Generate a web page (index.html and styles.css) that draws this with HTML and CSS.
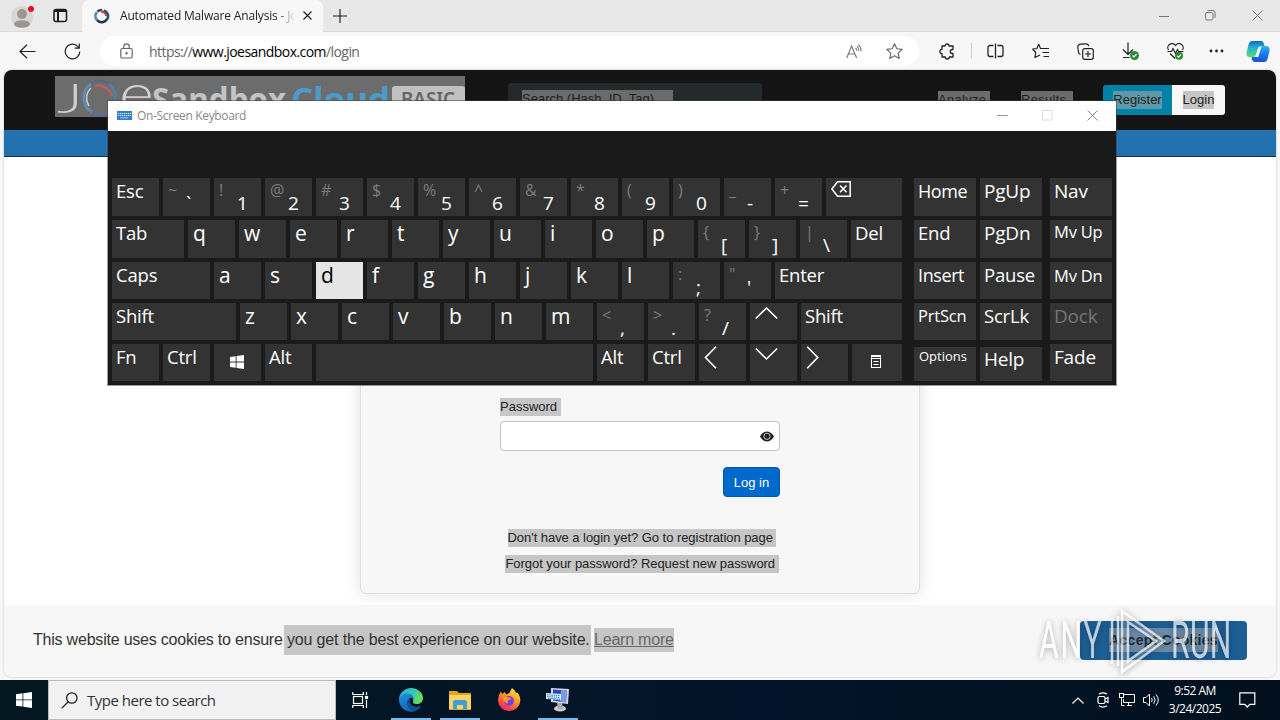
FILE: index.html
```html
<!DOCTYPE html>
<html lang="en">
<head>
    <meta charset="UTF-8">
    <title>Automated Malware Analysis - Joe Sandbox Cloud Basic</title>
    <link rel="stylesheet" href="styles.css">
</head>
<body>

<!-- browser -->
<div class="browser">
    <div class="tabbar">
        <svg class="avatar" width="26" height="26" viewBox="0 0 26 26">
            <circle cx="11" cy="14" r="11" fill="#d9d7d5"/>
            <circle cx="11" cy="11" r="5" fill="#9b9794"/>
            <ellipse cx="11" cy="21" rx="8" ry="3.800" fill="#9b9794"/>
            <circle cx="20" cy="6" r="3" fill="#e81123"/>
        </svg>
        <svg class="workspaces" width="15" height="15" viewBox="0 0 15 15" fill="none" stroke="#1b1b1b" stroke-width="1.500">
            <rect x="1" y="1.500" width="12.500" height="12" rx="2"/>
            <path d="M1 3h12.500M5 4v9.500" stroke-width="2"/>
        </svg>
        <div class="tab">
            <svg width="16" height="16" viewBox="0 0 16 16" fill="none" stroke-width="2.600">
                <path d="M3 12A6 6 0 0 1 3 4" stroke="#4b86b4"/>
                <path d="M3.500 3.500A6 6 0 0 1 8 2" stroke="#26466b"/>
                <path d="M7 3.500A5 5 0 0 1 12.500 8" stroke="#e23a3e"/>
                <path d="M10 2.400A6 6 0 0 1 13 11.500" stroke="#2c5378"/>
                <path d="M13 11A6 6 0 0 1 3 12" stroke="#1d3552"/>
            </svg>
            <span class="tab-title">Automated Malware Analysis - Jo</span>
            <svg class="tab-close" width="9" height="9" viewBox="0 0 9 9" stroke="#222" stroke-width="1.200"><path d="M.5.5l8 8M8.500.5l-8 8"/></svg>
        </div>
        <svg class="newtab" width="14" height="14" viewBox="0 0 14 14" stroke="#222" stroke-width="1.200"><path d="M7 0v14M0 7h14"/></svg>
        <div class="winbtns">
            <svg width="10" height="12" viewBox="0 0 10 12" stroke="#777"><path d="M0 6.500h10"/></svg>
            <svg width="11" height="11" viewBox="0 0 11 11" fill="none" stroke="#777"><rect x=".5" y="2.500" width="7.500" height="7.500" rx="1.500"/><path d="M2.500.5h5.500a2 2 0 0 1 2 2v5.500"/></svg>
            <svg width="11" height="11" viewBox="0 0 11 11" stroke="#777"><path d="M.5.5l10 10M10.500.5l-10 10"/></svg>
        </div>
    </div>

    <div class="toolbar">
        <svg class="back" width="17" height="15" viewBox="0 0 17 15" fill="none" stroke="#222" stroke-width="1.200"><path d="M16.500 7.500H1M8 .8L1 7.500l7 6.700"/></svg>
        <svg class="reload" width="17" height="17" viewBox="0 0 17 17" fill="none" stroke="#222" stroke-width="1.200"><path d="M15.800 8.500A7.300 7.300 0 1 1 12.800 2.600L15 4.800M15.300.5v4.600h-4.600"/></svg>
        <div class="address">
            <svg class="lock" width="13" height="16" viewBox="0 0 13 16" fill="none" stroke="#666" stroke-width="1.200"><rect x=".8" y="5.500" width="11.400" height="9.500" rx="1.500"/><path d="M3.800 5.500V3.500a2.700 2.700 0 0 1 5.400 0v2"/><circle cx="6.500" cy="10.200" r=".6" fill="#666"/></svg>
            <span class="url">https://<b>www.joesandbox.com</b>/login</span>
            <svg class="aloud" width="16" height="15" viewBox="0 0 16 15" fill="none" stroke="#777" stroke-width="1.100"><path d="M.7 14L5.600 2l5 12M2.300 10h6.700M9.500 3.800a3.500 3.500 0 0 1 1.200 3M11 2.200a6 6 0 0 1 1.800 5M12.500.7a8 8 0 0 1 2.400 6.500"/></svg>
            <svg class="star" width="17" height="16" viewBox="0 0 17 16" fill="none" stroke="#666" stroke-width="1.100" stroke-linejoin="round"><path d="M8.500.8l2.300 4.900 5.400.7-4 3.700 1 5.300-4.700-2.600-4.700 2.600 1-5.300-4-3.700 5.400-.7z"/></svg>
        </div>
        <div class="tools">
            <svg width="17" height="17" viewBox="0 0 17 17" fill="none" stroke="#222" stroke-width="1.300" stroke-linejoin="round"><path d="M3 3h3a2 2 0 0 1 4 0h4v3.500h-.7a2 2 0 0 0 0 4h.7V14h-3.700a2 2 0 0 1-4 0H3v-3.300a2.200 2.200 0 0 1 0-4.400z"/></svg>
            <i class="divider"></i>
            <svg width="17" height="16" viewBox="0 0 17 16" fill="none" stroke="#222" stroke-width="1.300"><path d="M8.500.5v15M6.500 2.500H3a2 2 0 0 0-2 2v7a2 2 0 0 0 2 2h3.500M10.500 2.500H14a2 2 0 0 1 2 2v7a2 2 0 0 1-2 2h-3.500"/></svg>
            <svg width="17" height="16" viewBox="0 0 17 16" fill="none" stroke="#222" stroke-width="1.200" stroke-linejoin="round"><path d="M10 5.500L8.500 5.500 6.700 1.300 4.900 5.500.7 6l3 3.500-.8 5L8 12M9.800 5.500H17M10.500 9.500H17M11.500 13.500H17"/></svg>
            <svg width="17" height="17" viewBox="0 0 17 17" fill="none" stroke="#222" stroke-width="1.200"><rect x="5.700" y="5.700" width="10.600" height="10.600" rx="2"/><path d="M11 8v6M8 11h6M3.500 11.500A2.500 2.500 0 0 1 1.500 9L.8 4.500A3 3 0 0 1 3.600 1.200L9 .8a2.500 2.500 0 0 1 2.600 2.500"/></svg>
            <svg width="17" height="18" viewBox="0 0 17 18" fill="none" stroke="#222" stroke-width="1.200"><path d="M6 .5v11.500M1 7.500l5 4.800 5-4.800M1 15.500h6.500"/><circle cx="12.500" cy="13.500" r="4.500" fill="#2a8a35" stroke="none"/><path d="M10.500 13.500l1.500 1.500 2.600-2.800" stroke="#fff"/></svg>
            <svg width="17" height="17" viewBox="0 0 17 17" fill="none" stroke="#222" stroke-width="1.200"><path d="M1.500 7A4 4 0 0 1 8.500 2.500 4 4 0 0 1 15.500 7M.5 8.500h4l1.500-3 2.500 5 2-4 1 2h5M3 10.500L8 15.500"/><circle cx="12" cy="12.800" r="4" fill="#2a8a35" stroke="none"/><path d="M10.200 12.800l1.300 1.400 2.500-2.600" stroke="#fff"/></svg>
            <svg class="more" width="15" height="4" viewBox="0 0 15 4" fill="#222"><circle cx="2" cy="2" r="1.400"/><circle cx="7.500" cy="2" r="1.400"/><circle cx="13" cy="2" r="1.400"/></svg>
            <svg class="copilot" width="24" height="23" viewBox="0 0 24 23">
                <defs>
                    <linearGradient id="cpA" x1="0" y1="0" x2="0" y2="1"><stop offset="0" stop-color="#1469c9"/><stop offset=".45" stop-color="#25b7cf"/><stop offset="1" stop-color="#63d66c"/></linearGradient>
                    <linearGradient id="cpB" x1="0" y1="0" x2="0" y2="1"><stop offset="0" stop-color="#2bb3f3"/><stop offset=".6" stop-color="#1973e8"/><stop offset="1" stop-color="#1550d4"/></linearGradient>
                </defs>
                <path d="M6 1h9c2 0 2.500 1.500 3 3l.5 2h-3c-2 0-3 1-3.500 3l-1.500 5c-.6 2-1.500 3-3.500 3H4c-3 0-4-2-3.300-5l2-8C3.400 2 4.400 1 6 1z" fill="url(#cpA)"/>
                <path d="M18 22H9c-2 0-2.700-1.500-3.200-3.200L5.500 17H8c2 0 3-1 3.600-3l1.600-5c.6-2 1.600-3 3.500-3H20c3 0 4.300 2 3.500 5l-2 8c-.6 2-1.800 3-3.500 3z" fill="url(#cpB)"/>
                <path d="M12.500 7h3l-3.300 10h-3z" fill="#f7f7f7"/>
            </svg>
        </div>
    </div>

    <div class="page">
        <div class="header">
            <svg class="logo" width="410" height="41" viewBox="0 0 410 41">
                <rect width="410" height="41" fill="#6c6c6c"/>
                <text class="logo-thin" x="2" y="37" font-size="41" textLength="26" lengthAdjust="spacingAndGlyphs">J</text>
                <g fill="none" stroke-width="3">
                    <path d="M37 36A16.500 16.500 0 0 1 36 8" stroke="#5f8db4"/>
                    <path d="M34 30A14 14 0 0 1 36 12" stroke="#c3ccd6" stroke-width="1.500"/>
                    <path d="M36 7A16.500 16.500 0 0 1 54 8" stroke="#50687f" stroke-width="2"/>
                    <path d="M40 10A14 14 0 0 1 57 20" stroke="#b85f5f"/>
                    <path d="M54 8A16.500 16.500 0 0 1 60 23" stroke="#4f7fa8"/>
                    <path d="M38 37A15.500 15.500 0 0 0 54 35" stroke="#5a6f96"/>
                </g>
                <text class="logo-thin" x="64" y="38" font-size="58" textLength="35" lengthAdjust="spacingAndGlyphs">e</text>
                <text class="logo-bold" x="97" y="35" font-size="32" textLength="134" lengthAdjust="spacingAndGlyphs" fill="#c4c4c4">Sandbox</text>
                <text class="logo-bold" x="236" y="35" font-size="32" textLength="99" lengthAdjust="spacingAndGlyphs" fill="#4b9bcb">Cloud</text>
                <rect x="337" y="10" width="73" height="31" rx="3" fill="#c0c0c0"/>
                <text class="logo-basic" x="346" y="30" font-size="20" textLength="54" lengthAdjust="spacingAndGlyphs">BASIC</text>
            </svg>
            <div class="search-hash"><span class="sel-dark">Search (Hash, ID, Tag)</span></div>
            <div class="nav"><span class="sel-dark">Analyze</span><span class="sel-dark">Results</span></div>
            <div class="account">
                <a class="register"><span>Register</span></a>
                <a class="login"><span>Login</span></a>
            </div>
        </div>
        <div class="bluebar"></div>
        <div class="content">
            <div class="card">
                <div class="form">
                    <label><span class="sel">Password&nbsp;</span></label>
                    <div class="input">
                        <svg width="14" height="11" viewBox="0 0 14 11"><path d="M0 5.500C2 2 4.500.6 7 .6S12 2 14 5.500C12 9 9.500 10.400 7 10.400S2 9 0 5.500z" fill="#222"/><circle cx="7" cy="5.300" r="3.100" fill="none" stroke="#ddd" stroke-width=".9"/><circle cx="7" cy="5" r="2.200" fill="#222"/></svg>
                    </div>
                    <div class="actions"><button class="submit">Log in</button></div>
                </div>
                <p class="link"><span class="sel">Don't have a login yet? Go to registration page&nbsp;</span></p>
                <p class="link"><span class="sel">Forgot your password? Request new password&nbsp;</span></p>
            </div>
        </div>
        <div class="cookies">
            <span class="cookie-text">This website uses cookies to ensure</span>
            <span class="cookie-sel">you get the best experience on our website.</span>
            <a class="learn">Learn more</a>
            <div class="accept"><span>Accept Cookies</span></div>
        </div>
    </div>
</div>

<!-- taskbar -->
<div class="taskbar">
    <div class="start">
        <svg width="16" height="16" viewBox="0 0 16 16" fill="#fff"><path d="M0 2.200L6.500 1.300V7.500H0zM7.300 1.200L16 0v7.500H7.300zM0 8.300h6.500v6.300L0 13.700zM7.300 8.300H16V16l-8.700-1.200z"/></svg>
    </div>
    <div class="searchbox">
        <svg width="17" height="17" viewBox="0 0 17 17" fill="none" stroke="#222" stroke-width="1.300"><circle cx="10.800" cy="6" r="5.200"/><path d="M7.200 9.800L.6 16.400"/></svg>
        <span>Type here to search</span>
    </div>
    <div class="app taskview">
        <svg width="17" height="16" viewBox="0 0 17 16" fill="none" stroke="#fff" stroke-width="1.200"><rect x="1.500" y="4.500" width="9" height="7"/><path d="M.8 0v2.500h10.500V0M.8 16v-2.500h10.500V16M14.500 0v3M14.500 8v8"/><rect x="13.500" y="4.500" width="2" height="2" fill="#fff"/></svg>
    </div>
    <div class="app open">
        <svg width="24" height="24" viewBox="0 0 24 24">
            <defs>
                <linearGradient id="edA" x1="0" y1="0" x2="1" y2=".4"><stop offset="0" stop-color="#2aa8e0"/><stop offset=".6" stop-color="#35c8b4"/><stop offset="1" stop-color="#6bdb57"/></linearGradient>
                <linearGradient id="edB" x1="0" y1="0" x2=".5" y2="1"><stop offset="0" stop-color="#1f94df"/><stop offset="1" stop-color="#1262b8"/></linearGradient>
            </defs>
            <path d="M0 12C0 5 5.500 0 12 0s12 4.500 12 10c0 4-3 6-6.500 6-3 0-4-1-3.500-2.500 1-2-.5-5.500-5-5.500-5 0-9 2-9 4z" fill="url(#edA)"/>
            <path d="M0 12c0-4 4-6.500 8.500-6.500S15 9 15 11c-1.500-2-5-1.500-6 2-1.300 4.800 3 9.500 8.500 8.700l-2 1.500A12 12 0 0 1 0 12z" fill="url(#edB)"/>
            <path d="M8.500 12.500c-2 5 2 10.500 7 10.700 3-1 5.500-3 6.800-5.500-4 2-10 1.300-11.300-3-.5-2 0-3 1-4-1.600 0-3 .6-3.500 1.800z" fill="#134d94"/>
        </svg>
    </div>
    <div class="app open">
        <svg width="22" height="20" viewBox="0 0 22 20"><path d="M0 1h8l2 2h12v4H0z" fill="#e5a321"/><path d="M0 5h22v14H0z" fill="#fcd462"/><path d="M4 19v-7q0-2 2-2h10q2 0 2 2v7h-4v-4H8v4z" fill="#3f9fdc"/><path d="M0 19h22v1H0z" fill="#d9a437"/></svg>
    </div>
    <div class="app">
        <svg width="24" height="24" viewBox="0 0 24 24">
            <defs><linearGradient id="ffA" x1=".8" y1="0" x2=".2" y2="1"><stop offset="0" stop-color="#ffe14a"/><stop offset=".45" stop-color="#ff9427"/><stop offset=".8" stop-color="#fb3b52"/><stop offset="1" stop-color="#e5268a"/></linearGradient></defs>
            <path d="M1 13C1 9 2 6 4 3.500L5 6l3-2 1 2.500c2-.5 3.500-1 4-3L15 0c2 1.500 3.500 3 4 5l1.500-.5C22.500 7 23.500 10 23.300 13A11.200 11.200 0 0 1 1 13z" fill="url(#ffA)"/>
            <circle cx="12" cy="13" r="5" fill="#7b3fe0"/><path d="M6 9c2-1 4-.5 5.500.5l2.500.5c0 1.500-2 2-3 2.500-.8 1-.5 2 .5 3-3 0-6-3-5.500-6.500z" fill="#ff9427"/>
        </svg>
    </div>
    <div class="app open">
        <svg width="24" height="24" viewBox="0 0 24 24"><ellipse cx="14" cy="20.500" rx="6" ry="3" fill="#cfcfca"/><path d="M11 15l5 0 1 6h-5z" fill="#aaa"/><path d="M5 0l18 1-1 15-17-2z" fill="#d8dbe4"/><path d="M7 1.500l14 1-1 12-13-2z" fill="#2747b9"/><path d="M15 2l6 .5-1 12-6-1z" fill="#7b9bea"/><path d="M0 5l15 1v6L0 11z" fill="#dfeefc"/><path d="M1 6.800l13 .8M1 8.600l13 .8M2 10.300l12 .8" stroke="#2e7cc5" stroke-width="1" stroke-dasharray="1.500 .7"/></svg>
    </div>
    <div class="tray">
        <svg class="t-up" width="12" height="7" viewBox="0 0 12 7" fill="none" stroke="#fff" stroke-width="1.200"><path d="M.5 6.500L6 1l5.500 5.500"/></svg>
        <svg class="t-cam" width="12" height="16" viewBox="0 0 12 16" fill="none" stroke="#fff" stroke-width="1.200"><rect x="1" y="4.500" width="7" height="7" rx="1.500"/><path d="M8 7l3-1.500v5L8 9M2 2.200Q6-.5 10 2.200M2 13.800q4 2.700 8 0"/></svg>
        <svg class="t-net" width="16" height="14" viewBox="0 0 16 14" fill="none" stroke="#fff"><path d="M5 1.500h10.500v8H4.500V6M8 12.500h5M9.500 9.500v3M2.500 5v7.500h3"/><rect x=".5" y=".5" width="4" height="4"/></svg>
        <svg class="t-vol" width="17" height="14" viewBox="0 0 17 14" fill="none" stroke="#fff"><path d="M.5 4.500h2.500L6.500 1v12L3 9.500H.5zM8.500 5q1.500 2 0 4M10.700 3.300q3 3.700 0 7.400M13 1.500q4.500 5.500 0 11"/></svg>
        <div class="clock"><span>9:52 AM</span><span>3/24/2025</span></div>
        <svg class="t-note" width="17" height="16" viewBox="0 0 17 16" fill="none" stroke="#fff" stroke-width="1.200"><path d="M.8.8h15v11.500h-5L8.300 15l-2.500-2.700h-5z"/></svg>
    </div>
</div>

<!-- on-screen keyboard window -->
<div class="osk">
    <div class="osk-title">
        <svg width="15" height="9" viewBox="0 0 15 9"><rect width="15" height="9" fill="#2f7fd0"/><path d="M1 2.500h13M1 4.500h13M3.500 6.800h8" stroke="#fff" stroke-dasharray="1.200 .8"/></svg>
        <span>On-Screen Keyboard</span>
        <div class="osk-btns">
            <svg width="11" height="11" viewBox="0 0 11 11" stroke="#999"><path d="M0 5.500h11"/></svg>
            <svg width="11" height="11" viewBox="0 0 11 11" fill="none" stroke="#ddd"><rect x=".5" y=".5" width="9.500" height="9.500"/></svg>
            <svg width="11" height="11" viewBox="0 0 11 11" stroke="#888"><path d="M.5.500l10 10M10.500.5l-10 10"/></svg>
        </div>
    </div>
    <div class="osk-body">
        <div class="main-keys">
            <div class="row tall">
                <div class="key">Esc</div>
                <div class="key dual"><i>~</i><b>`</b></div>
                <div class="key dual"><i>!</i><b>1</b></div>
                <div class="key dual"><i>@</i><b>2</b></div>
                <div class="key dual"><i>#</i><b>3</b></div>
                <div class="key dual"><i>$</i><b>4</b></div>
                <div class="key dual"><i>%</i><b>5</b></div>
                <div class="key dual"><i>^</i><b>6</b></div>
                <div class="key dual"><i>&amp;</i><b>7</b></div>
                <div class="key dual"><i>*</i><b>8</b></div>
                <div class="key dual"><i>(</i><b>9</b></div>
                <div class="key dual"><i>)</i><b>0</b></div>
                <div class="key dual"><i>_</i><b>-</b></div>
                <div class="key dual"><i>+</i><b>=</b></div>
                <div class="key grow"><svg class="bksp" width="20" height="16" viewBox="0 0 20 16" fill="none" stroke="#fff" stroke-width="1.500"><path d="M.9 8L6.500.8h12.700v14.400H6.500zM9 4.500l6.500 6.700M15.500 4.500L9 11.200"/></svg></div>
            </div>
            <div class="row tall">
                <div class="key w-tab">Tab</div>
                <div class="key char">q</div>
                <div class="key char">w</div>
                <div class="key char">e</div>
                <div class="key char">r</div>
                <div class="key char">t</div>
                <div class="key char">y</div>
                <div class="key char">u</div>
                <div class="key char">i</div>
                <div class="key char">o</div>
                <div class="key char">p</div>
                <div class="key dual"><i>{</i><b>[</b></div>
                <div class="key dual"><i>}</i><b>]</b></div>
                <div class="key dual"><i>|</i><b>\</b></div>
                <div class="key grow">Del</div>
            </div>
            <div class="row">
                <div class="key w-caps">Caps</div>
                <div class="key char">a</div>
                <div class="key char">s</div>
                <div class="key char pressed">d</div>
                <div class="key char">f</div>
                <div class="key char">g</div>
                <div class="key char">h</div>
                <div class="key char">j</div>
                <div class="key char">k</div>
                <div class="key char">l</div>
                <div class="key dual"><i>:</i><b>;</b></div>
                <div class="key dual"><i>"</i><b>'</b></div>
                <div class="key grow">Enter</div>
            </div>
            <div class="row">
                <div class="key w-shift">Shift</div>
                <div class="key char">z</div>
                <div class="key char">x</div>
                <div class="key char">c</div>
                <div class="key char">v</div>
                <div class="key char">b</div>
                <div class="key char">n</div>
                <div class="key char">m</div>
                <div class="key dual"><i>&lt;</i><b>,</b></div>
                <div class="key dual"><i>&gt;</i><b>.</b></div>
                <div class="key dual"><i>?</i><b>/</b></div>
                <div class="key"><svg class="arrow" width="23" height="23" viewBox="0 0 23 23"><path d="M.8 13.500L11.500 3l10.700 10.500"/></svg></div>
                <div class="key grow">Shift</div>
            </div>
            <div class="row">
                <div class="key">Fn</div>
                <div class="key">Ctrl</div>
                <div class="key icon"><svg width="14" height="14" viewBox="0 0 16 16" fill="#fff"><path d="M0 2.200L6.500 1.300V7.500H0zM7.500 1.200L16 0v7.500H7.500zM0 8.500h6.500v6.100L0 13.700zM7.500 8.500H16V16l-8.500-1.200z"/></svg></div>
                <div class="key">Alt</div>
                <div class="key w-space"></div>
                <div class="key">Alt</div>
                <div class="key">Ctrl</div>
                <div class="key"><svg class="arrow" width="23" height="23" viewBox="0 0 23 23"><path d="M12 .8L1.500 11.500 12 22.200"/></svg></div>
                <div class="key"><svg class="arrow" width="23" height="23" viewBox="0 0 23 23"><path d="M.8 2.500L11.500 13 22.200 2.500"/></svg></div>
                <div class="key"><svg class="arrow" width="23" height="23" viewBox="0 0 23 23"><path d="M1.200.8L11.700 11.500 1.200 22.200"/></svg></div>
                <div class="key grow icon"><svg width="10" height="13" viewBox="0 0 10 13" fill="none" stroke="#fff"><rect x=".5" y=".5" width="9" height="12"/><path d="M0 1.500h10M0 3.500h10M2.500 6.500h5M2.500 9.500h5"/></svg></div>
            </div>
        </div>
        <div class="nav-keys">
            <div class="key s17">Home</div>
            <div class="key s19">PgUp</div>
            <div class="key">End</div>
            <div class="key s19">PgDn</div>
            <div class="key s17">Insert</div>
            <div class="key">Pause</div>
            <div class="key s16">PrtScn</div>
            <div class="key">ScrLk</div>
            <div class="key s13 low">Options</div>
            <div class="key s19 low">Help</div>
        </div>
        <div class="win-keys">
            <div class="key s19">Nav</div>
            <div class="key s16 up">Mv Up</div>
            <div class="key s16 down">Mv Dn</div>
            <div class="key s19 off">Dock</div>
            <div class="key s19">Fade</div>
        </div>
    </div>
</div>

<!-- watermark -->
<svg class="watermark" width="210" height="70" viewBox="0 0 210 70">
    <g fill="#fff" class="wm-text">
        <text transform="translate(9 52) scale(.58 1)" textLength="108" lengthAdjust="spacing" font-size="52">ANY</text>
        <text transform="translate(141 52) scale(.58 1)" textLength="104" lengthAdjust="spacing" font-size="52">RUN</text>
    </g>
    <path d="M82 12v46M88 10v50" stroke="#fff" stroke-width="2.500"/>
    <path d="M92 5l42 30-42 31zM98 16v39l28-20z" fill="#fff" fill-opacity=".25" stroke="#fff" stroke-width="2.500"/>
</svg>

</body>
</html>
```
FILE: styles.css
```css
* {
    box-sizing: border-box;
    padding: 0;
    margin: 0;
}
body {
    width: 1280px;
    height: 720px;
    overflow: hidden;
    position: relative;
    display: flex;
    flex-direction: column;
    font-family: "Open Sans", "Noto Sans", sans-serif;
    font-size: 12px;
    color: #222;
}
svg {
    display: block;
    flex: none;
}

/* browser */
.browser {
    height: 680px;
    display: flex;
    flex-direction: column;
    background: #f7f7f7;
}
.tabbar {
    height: 32px;
    display: flex;
    align-items: center;
    background: #e8e8e8;
    border-bottom: 1px solid #dadada;
}
.avatar {
    margin-left: 11px;
}
.workspaces {
    margin-left: 16px;
}
.tab {
    width: 241px;
    height: 32px;
    margin-left: 14px;
    padding: 0 11px 0 12px;
    display: flex;
    align-items: center;
    background: #f7f7f7;
    border-radius: 7px 7px 0 0;
}
.tab-title {
    width: 174px;
    margin-left: 10px;
    overflow: hidden;
    white-space: nowrap;
    font-size: 12px;
    letter-spacing: -.17px;
    -webkit-mask-image: linear-gradient(90deg, #000 155px, transparent 176px);
    mask-image: linear-gradient(90deg, #000 155px, transparent 176px);
}
.tab-close {
    margin-left: 9px;
}
.newtab {
    margin-left: 10px;
}
.winbtns {
    margin-left: auto;
    margin-right: 17px;
    display: flex;
    align-items: center;
    gap: 36px;
}
.toolbar {
    height: 38px;
    display: flex;
    align-items: center;
}
.back {
    margin-left: 19px;
}
.reload {
    margin-left: 28px;
}
.address {
    width: 819px;
    height: 30px;
    margin-left: 19px;
    display: flex;
    align-items: center;
    background: #fff;
    border-radius: 15px;
}
.lock {
    margin-left: 20px;
}
.url {
    margin-left: 16px;
    font-size: 14px;
    letter-spacing: -.56px;
    color: #666;
}
.url b {
    font-weight: 400;
    color: #000;
}
.aloud {
    margin-left: auto;
}
.star {
    margin: 0 16px 0 24px;
}
.tools {
    flex: 1;
    padding-left: 20px;
    display: flex;
    align-items: center;
    gap: 28px;
}
.divider {
    width: 1px;
    height: 16px;
    margin: 0 -13px;
    background: #ccc;
}
.more {
    margin-left: -3px;
}
.copilot {
    margin-left: -6px;
}

/* page */
.page {
    width: 1272px;
    height: 607px;
    margin-left: 4px;
    display: flex;
    flex-direction: column;
    background: #fff;
    border-radius: 8px;
    overflow: hidden;
    box-shadow: 0 0 2px #aaa;
    font-family: "Liberation Sans", Arial, sans-serif;
    font-size: 13px;
}
.header {
    height: 60px;
    flex: none;
    display: flex;
    align-items: center;
    background: #141414;
}
.logo {
    margin: -7px 0 0 51px;
}
.logo-thin {
    font-family: Lato, sans-serif;
    font-weight: 300;
    fill: #d0d0d0;
}
.logo-bold {
    font-family: "Open Sans", sans-serif;
    font-weight: 700;
}
.logo-basic {
    font-family: "Noto Sans", sans-serif;
    font-weight: 600;
    fill: #666;
}
.search-hash {
    width: 254px;
    height: 34px;
    margin-left: 43px;
    padding: 7px 14px;
    align-self: flex-start;
    margin-top: 13px;
    background: #24292c;
    border-radius: 3px;
}
.sel-dark {
    display: inline-block;
    height: 18px;
    line-height: 18px;
    background: #6b6b6b;
    color: #1c1c1c;
}
.search-hash .sel-dark {
    width: 151px;
}
.nav {
    margin-left: 176px;
    display: flex;
    gap: 31px;
}
.nav .sel-dark {
    width: 52px;
    letter-spacing: .3px;
}
.account {
    margin-left: 30px;
    display: flex;
    height: 30px;
    border-radius: 3px;
    overflow: hidden;
}
.account a {
    display: flex;
    align-items: center;
    justify-content: center;
}
.account span {
    height: 18px;
    line-height: 18px;
}
.register {
    width: 69px;
    background: #0081a8;
}
.register span {
    background: #5e98a9;
}
.login {
    width: 53px;
    background: #f7f7f7;
}
.login span {
    background: #c6c6c6;
}
.bluebar {
    height: 27px;
    flex: none;
    background: #2271b0;
    border-bottom: 1px solid #17334b;
}
.content {
    height: 448px;
    flex: none;
    padding-left: 356px;
}
.card {
    width: 560px;
    height: 437px;
    padding-top: 240px;
    background: #f7f7f7;
    border: 1px solid #e0e0e0;
    border-radius: 6px;
    box-shadow: 0 0 16px rgba(0, 0, 0, .12);
    text-align: center;
}
.form {
    width: 280px;
    margin: 0 auto;
    text-align: left;
}
.sel {
    display: inline-block;
    height: 18px;
    line-height: 18px;
    background: #c6c6c6;
    white-space: nowrap;
}
.form label {
    display: block;
    height: 23px;
}
.input {
    height: 30px;
    padding-right: 5px;
    display: flex;
    align-items: center;
    justify-content: flex-end;
    background: #fff;
    border: 1px solid #c4c4c4;
    border-radius: 4px;
}
.actions {
    margin: 16px 0 32px;
    display: flex;
    justify-content: flex-end;
}
.submit {
    width: 57px;
    height: 30px;
    background: #0069cc;
    border: 1px solid #0058ad;
    border-radius: 4px;
    color: #fff;
    font: 13px "Liberation Sans", Arial, sans-serif;
}
.link {
    height: 26px;
    padding-left: 4px;
    letter-spacing: -.05px;
}
.cookies {
    flex: 1;
    padding: 0 29px 2px;
    display: flex;
    align-items: center;
    background: #f7f7f7;
    font-size: 16px;
    letter-spacing: -.21px;
    color: #333;
}
.cookie-text {
    width: 251px;
    white-space: nowrap;
}
.cookie-sel {
    width: 307px;
    height: 30px;
    padding-left: 3px;
    line-height: 30px;
    background: #c6c6c6;
    letter-spacing: -.16px;
    white-space: nowrap;
}
.learn {
    margin-left: 3px;
    height: 24px;
    line-height: 24px;
    background: #c6c6c6;
    color: #666;
    text-decoration: underline;
}
.accept {
    width: 167px;
    height: 39px;
    margin-left: auto;
    display: flex;
    align-items: center;
    justify-content: center;
    background: #1d5e94;
    border-radius: 4px;
    font-size: 14px;
    font-weight: 700;
    letter-spacing: .25px;
}
.accept span {
    height: 24px;
    line-height: 24px;
    background: #6c8ca8;
    color: #1d2a35;
}

/* taskbar */
.taskbar {
    height: 40px;
    display: flex;
    align-items: center;
    background: linear-gradient(90deg, #02171f, #03142a 60%, #02101d);
    color: #fff;
}
.start {
    width: 48px;
    padding-left: 16px;
}
.searchbox {
    width: 288px;
    height: 40px;
    padding-left: 12px;
    display: flex;
    align-items: center;
    background: #f2f2f2;
    border: 1px solid #bbb;
    color: #333;
    font-size: 15px;
    letter-spacing: -.5px;
}
.searchbox span {
    margin-left: 9px;
}
.app {
    width: 40px;
    height: 40px;
    margin-left: 9px;
    display: flex;
    align-items: center;
    justify-content: center;
}
.taskview {
    margin-left: 4px;
    margin-right: 2px;
}
.open {
    border-bottom: 2px solid #76b9ed;
    padding-top: 2px;
}
.tray {
    margin-left: auto;
    margin-right: 24px;
    display: flex;
    align-items: center;
}
.t-cam {
    margin-left: 13px;
}
.t-net {
    margin-left: 10px;
}
.t-vol {
    margin-left: 8px;
}
.clock {
    width: 70px;
    display: flex;
    flex-direction: column;
    align-items: center;
    line-height: 18px;
    letter-spacing: -.5px;
}
.t-note {
    margin-left: 9px;
}

/* on-screen keyboard */
.osk {
    position: absolute;
    left: 108px;
    top: 101px;
    width: 1008px;
    height: 284px;
    background: #1a1a1a;
    box-shadow: 0 0 0 1px rgba(60, 60, 60, .5);
}
.osk-title {
    height: 30px;
    padding: 0 18px 2px 9px;
    display: flex;
    align-items: center;
    background: #fff;
    color: #888;
}
.osk-title span {
    margin-left: 5px;
    letter-spacing: -.35px;
}
.osk-btns {
    margin-left: auto;
    display: flex;
    gap: 34px;
}
.osk-body {
    padding: 47px 4px 0;
    display: flex;
}
.main-keys {
    width: 790px;
    display: flex;
    flex-direction: column;
    gap: 4px;
}
.row {
    height: 37px;
    display: flex;
    gap: 4px;
}
.row.tall {
    height: 38px;
}
.key {
    width: 47px;
    padding-left: 4px;
    background: #333;
    color: #fff;
    font-size: 18.500px;
    letter-spacing: -.2px;
    line-height: 26px;
    white-space: nowrap;
    overflow: hidden;
}
.char {
    padding-left: 5px;
    font-size: 21px;
}
.dual {
    padding-left: 5px;
    display: flex;
}
.dual i {
    width: 18px;
    margin-top: -1px;
    font-style: normal;
    font-size: 16px;
    color: #7d7d7d;
}
.dual b {
    margin-top: 12px;
    font-weight: 400;
    font-size: 19px;
}
.pressed {
    background: #e5e5e5;
    color: #000;
}
.icon {
    padding: 0 2px 2px 0;
    display: flex;
    align-items: center;
    justify-content: center;
}
.bksp {
    margin: 3px 0 0 1px;
}
.arrow {
    margin: 2px 0 0 1px;
    fill: none;
    stroke: #fff;
    stroke-width: 1.600;
}
.grow {
    flex: 1;
}
.w-tab {
    width: 72px;
}
.w-caps {
    width: 98px;
}
.w-shift {
    width: 124px;
}
.w-space {
    width: 277px;
}
.nav-keys,
.win-keys {
    margin-left: 12px;
    display: grid;
    grid-template-columns: 62px 62px;
    grid-template-rows: 38px 38px 37px 37px 37px;
    gap: 4px;
}
.win-keys {
    margin-left: 8px;
    grid-template-columns: 62px;
}
.nav-keys .key,
.win-keys .key {
    width: auto;
}
.key.s19 {
    font-size: 19px;
}
.key.s17 {
    font-size: 18px;
    letter-spacing: -.4px;
}
.key.s16 {
    font-size: 16.500px;
}
.key.s13 {
    padding-left: 5px;
    font-size: 13px;
    letter-spacing: 0;
}
.up {
    line-height: 23px;
}
.down {
    line-height: 28px;
}
.low {
    margin-top: 3px;
}
.key.s19.low {
    line-height: 25px;
}
.key.s13.low {
    line-height: 18px;
}
.off {
    color: #757575;
}

/* watermark */
.watermark {
    position: absolute;
    left: 1030px;
    top: 606px;
    opacity: .7;
    filter: drop-shadow(0 1px 3px rgba(0, 0, 0, .45));
}
.wm-text {
    font-family: Roboto, sans-serif;
    font-weight: 400;
}
```
